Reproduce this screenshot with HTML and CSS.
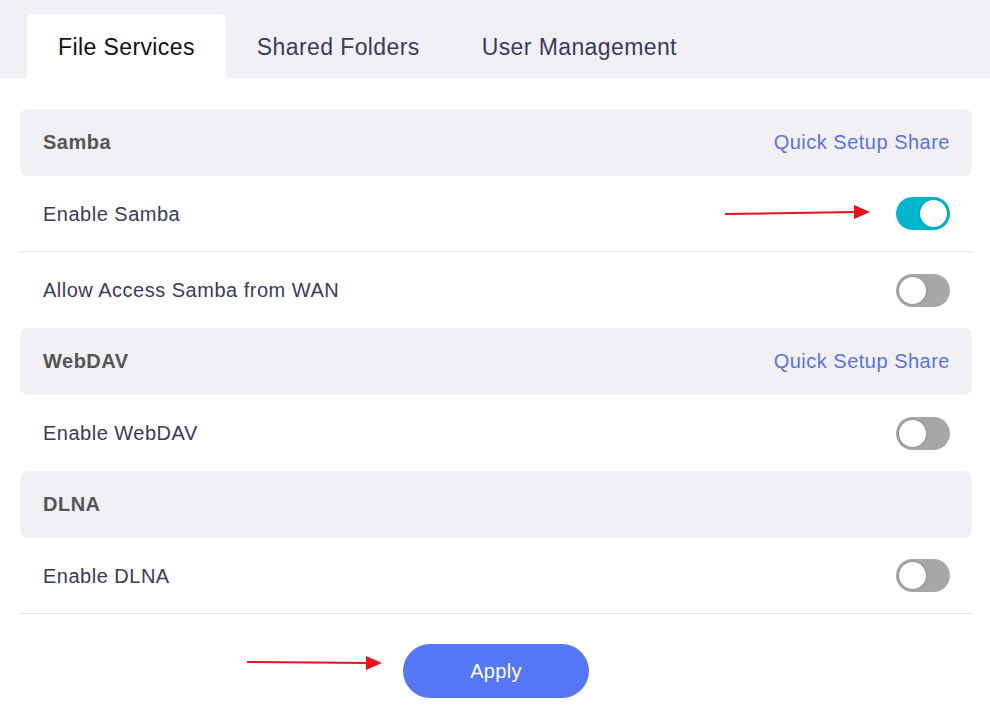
FILE: index.html
```html
<!DOCTYPE html>
<html lang="en">
<head>
<meta charset="utf-8">
<title>File Services</title>
<link rel="stylesheet" href="styles.css">
</head>
<body>
<div class="tabs">
  <div class="tab active">File Services</div>
  <div class="tab">Shared Folders</div>
  <div class="tab">User Management</div>
</div>
<div class="content">
  <div class="section-head"><span class="title">Samba</span><a class="link">Quick Setup Share</a></div>
  <div class="row"><span>Enable Samba</span><span class="switch on"></span>
    <svg class="arrow arrow-1" width="150" height="20" viewBox="0 0 150 20"><line x1="1" y1="11" x2="132" y2="9" stroke="#e8141c" stroke-width="2"/><polygon points="130,2 146,9 130,16" fill="#e8141c"/></svg>
  </div>
  <div class="row last"><span>Allow Access Samba from WAN</span><span class="switch"></span></div>
  <div class="section-head"><span class="title">WebDAV</span><a class="link">Quick Setup Share</a></div>
  <div class="row last"><span>Enable WebDAV</span><span class="switch"></span></div>
  <div class="section-head"><span class="title">DLNA</span></div>
  <div class="row"><span>Enable DLNA</span><span class="switch"></span></div>
  <div class="actions">
    <button class="apply">Apply</button>
    <svg class="arrow arrow-2" width="140" height="20" viewBox="0 0 140 20"><line x1="1" y1="9" x2="122" y2="10" stroke="#e8141c" stroke-width="2"/><polygon points="120,3 136,10 120,17" fill="#e8141c"/></svg>
  </div>
</div>
</body>
</html>
```
FILE: styles.css
```css
* { box-sizing: border-box; }
html, body { margin: 0; background: #fff; }
body { font-family: "Liberation Sans", Arial, sans-serif; width: 990px; height: 716px; overflow: hidden; }
.tabs { display: flex; height: 78px; background: #f1f1f5; padding: 14px 0 0 27px; }
.tab { padding: 20px 31px 0; font-size: 23px; letter-spacing: 0.4px; color: #3a3a60; height: 64px; }
.active { background: #fff; color: #111; border-radius: 6px 6px 0 0; }
.content { padding: 31px 18px 0 20px; }
.section-head { display: flex; align-items: center; justify-content: space-between; height: 67px; background: #f1f1f5; border-radius: 8px; padding: 0 23px; }
.title { font-size: 20px; letter-spacing: 0.5px; font-weight: bold; color: #555; }
.link { font-size: 20px; letter-spacing: 0.5px; color: #5a73e3; margin-right: -1px; }
.row { position: relative; display: flex; align-items: center; justify-content: space-between; height: 76px; padding: 0 22px 0 23px; border-bottom: 1px solid #e6e6e6; font-size: 20px; letter-spacing: 0.5px; color: #3a3a5a; }
.row span:first-child { padding-top: 1px; }
.row.last { border-bottom: none; }
.switch { position: relative; width: 54px; height: 33px; border-radius: 17px; background: #a7a7a7; }
.switch::after { content: ""; position: absolute; top: 3px; left: 3px; width: 27px; height: 27px; border-radius: 50%; background: #fff; box-shadow: 0 0 3px rgba(0,0,0,0.25); }
.switch.on { background: #00b6cc; }
.switch.on::after { left: 24px; }
.actions { position: relative; display: flex; justify-content: center; padding-top: 30px; }
.apply { width: 186px; height: 54px; border: none; border-radius: 27px; background: #5677f5; color: #fff; font-family: inherit; font-size: 20px; letter-spacing: 0.3px; }
.arrow { position: absolute; }
.arrow-1 { left: 704px; top: 27px; }
.arrow-2 { left: 226px; top: 39px; }
```
